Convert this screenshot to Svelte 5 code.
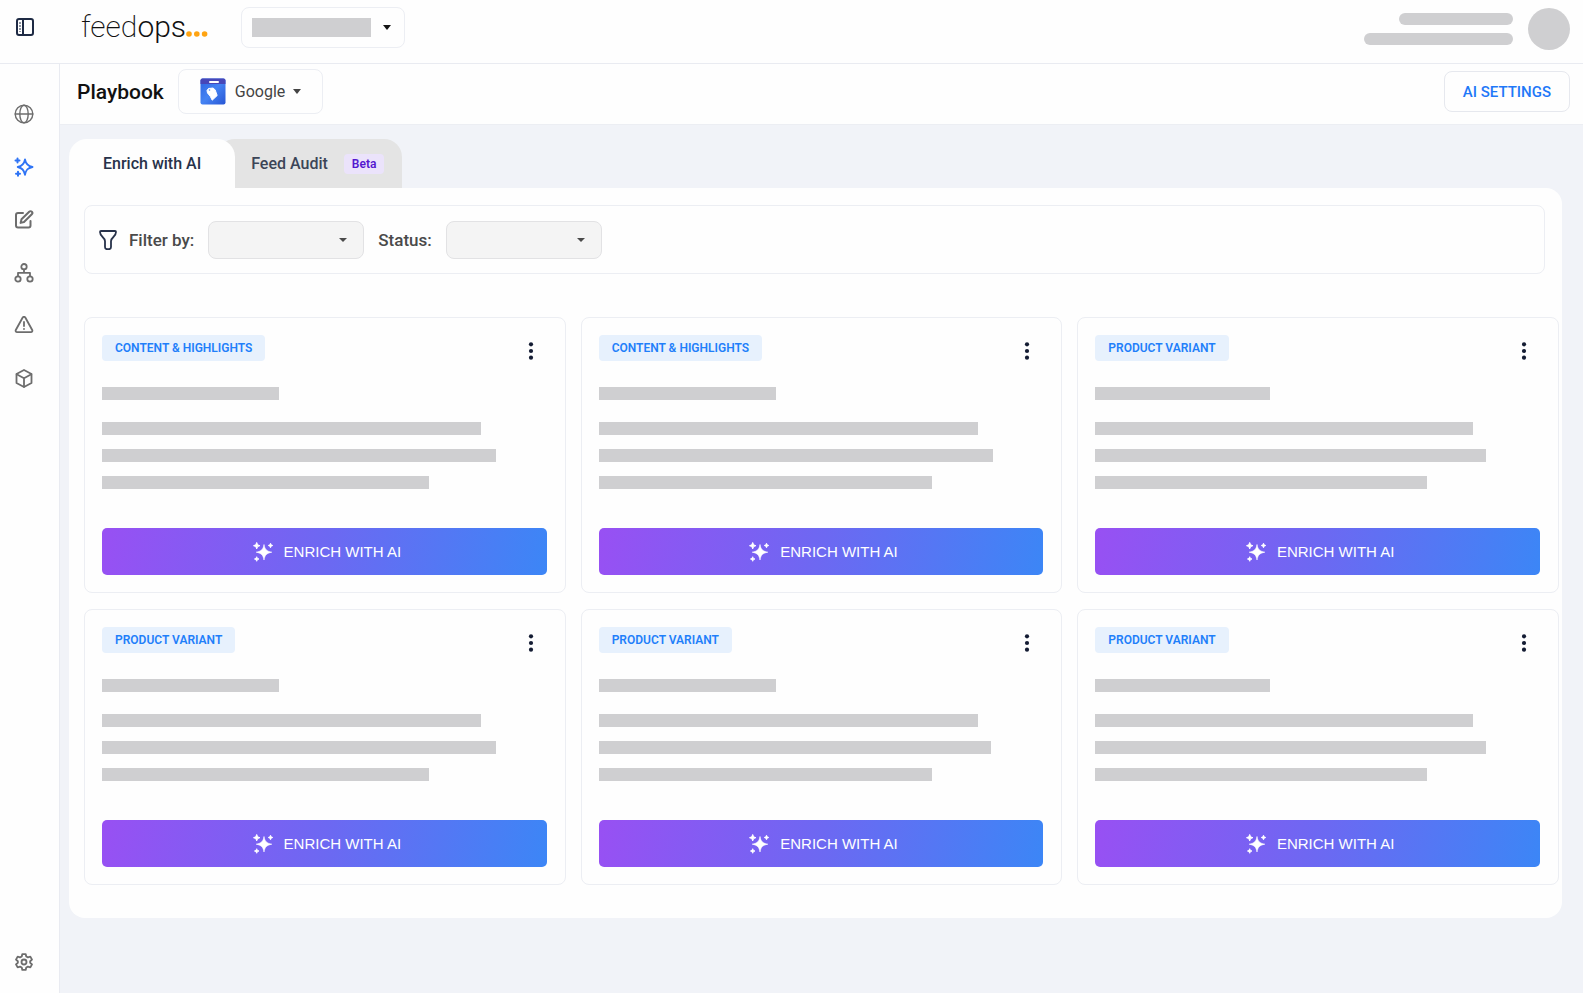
<script>
    const navItems = [
        { id: 'channels', label: 'Channels' },
        { id: 'playbook', label: 'Playbook' },
        { id: 'edit', label: 'Edit' },
        { id: 'structure', label: 'Structure' },
        { id: 'alerts', label: 'Alerts' },
        { id: 'products', label: 'Products' },
    ];

    const cards = [
        { tag: 'Content & Highlights', title: 177, lines: [379, 394, 327] },
        { tag: 'Content & Highlights', title: 177, lines: [379, 394, 333] },
        { tag: 'Product Variant', title: 175, lines: [378, 391, 332] },
        { tag: 'Product Variant', title: 177, lines: [379, 394, 327] },
        { tag: 'Product Variant', title: 177, lines: [379, 392, 333] },
        { tag: 'Product Variant', title: 175, lines: [378, 391, 332] },
    ];

    let activeNav = 'playbook';
    let activeTab = 'enrich';
</script>

<div class="app">
    <header class="topbar">
        <button class="icon-btn toggle" aria-label="Toggle sidebar">
            <svg width="20" height="20" viewBox="0 0 20 20" fill="none" stroke="#1e2a44" stroke-width="2">
                <rect x="2" y="2" width="16" height="16" rx="2" />
                <path d="M8 2v16" />
                <path d="M5 5v10" stroke-width="1" stroke-dasharray="2 1" />
            </svg>
        </button>
        <a class="logo" href="/" aria-label="feedops">
            <span class="thin">feed</span><span class="bold">ops</span>
            <svg width="22" height="6" viewBox="0 0 22 6" fill="#ffa412">
                <circle cx="3" cy="3" r="2.8" />
                <circle cx="10.8" cy="3" r="2.8" />
                <circle cx="18.6" cy="3" r="2.8" />
            </svg>
        </a>
        <div class="picker account">
            <select aria-label="Account"><option></option></select>
            <span class="skeleton account-name"></span>
            <svg class="caret" width="10" height="5" viewBox="0 0 10 5"><path d="M1 0h8L5 5z" /></svg>
        </div>
        <div class="user">
            <div class="user-lines">
                <span class="skeleton round short"></span>
                <span class="skeleton round"></span>
            </div>
            <span class="skeleton avatar"></span>
        </div>
    </header>

    <div class="body">
        <nav class="sidebar">
            {#each navItems as item}
                <button
                    class="icon-btn"
                    class:active={activeNav === item.id}
                    aria-label={item.label}
                    on:click={() => (activeNav = item.id)}
                >
                    <svg
                        width="20"
                        height="20"
                        viewBox="0 0 20 20"
                        fill="none"
                        stroke="currentColor"
                        stroke-width="1.8"
                        stroke-linecap="round"
                        stroke-linejoin="round"
                    >
                        {#if item.id === 'channels'}
                            <circle cx="10" cy="10" r="8.8" stroke-width="1.4" />
                            <ellipse cx="10" cy="10" rx="4.2" ry="8.8" stroke-width="1.4" />
                            <path d="M1.2 10h17.6" stroke-width="1.4" />
                        {:else if item.id === 'playbook'}
                            <path d="M11 2.5c.8 4.5 2.6 6.5 7.5 7.5-4.9 1-6.7 3-7.5 7.8-.8-4.8-2.6-6.8-7.3-7.8 4.7-1 6.5-3 7.3-7.5z" />
                            <path d="M3.5 1.5v4M1.5 3.5h4M4 14.7v4M2 16.7h4" stroke-width="2" />
                        {:else if item.id === 'edit'}
                            <path d="M9 3H4a2 2 0 0 0-2 2v10.500a2 2 0 0 0 2 2h10.500a2 2 0 0 0 2-2V11" stroke-width="2" />
                            <path d="M7.500 9.300l7.700-7.600a1.800 1.800 0 0 1 2.600 2.600L10 12l-3.400.9z" stroke-width="2" />
                        {:else if item.id === 'structure'}
                            <circle cx="10" cy="3.700" r="2.700" />
                            <circle cx="4" cy="16" r="2.700" />
                            <circle cx="16" cy="16" r="2.700" />
                            <path d="M10 6.400v3.400M4 13.300V9.800h12v3.500" />
                        {:else if item.id === 'alerts'}
                            <path d="M8.700 1.500L1.800 14a1.500 1.500 0 0 0 1.300 2.200h13.800a1.500 1.500 0 0 0 1.300-2.200L11.300 1.500a1.500 1.500 0 0 0-2.600 0z" />
                            <path d="M10 6v4M10 12.800v.2" />
                        {:else}
                            <path d="M10 1l7.500 4v9L10 18l-7.500-4V5z" />
                            <path d="M2.700 5.200L10 9.200l7.300-4M10 9.200v8.600" />
                        {/if}
                    </svg>
                </button>
            {/each}
            <button class="icon-btn settings" aria-label="Settings">
                <svg width="20" height="20" viewBox="0 0 24 24" fill="none" stroke="currentColor" stroke-width="2.2" stroke-linejoin="round">
                    <circle cx="12" cy="12" r="3" />
                    <path d="M10 2.500h4l.7 2.900 2 1.100 2.900-.9 2 3.500-2.200 2v1.800l2.200 2-2 3.500-2.900-.9-2 1.100-.7 2.900h-4l-.7-2.900-2-1.100-2.900.9-2-3.500 2.200-2v-1.800l-2.200-2 2-3.500 2.900.9 2-1.100z" />
                </svg>
            </button>
        </nav>

        <div class="content">
            <div class="subheader">
                <h1>Playbook</h1>
                <div class="picker channel">
                    <svg class="channel-icon" width="26" height="27" viewBox="0 0 26 27">
                        <defs>
                            <linearGradient id="shop" x1="0" y1="0" x2="1" y2="1">
                                <stop offset="0" stop-color="#2b63e0" />
                                <stop offset=".5" stop-color="#4583f3" />
                                <stop offset="1" stop-color="#2856d4" />
                            </linearGradient>
                        </defs>
                        <rect x=".5" y=".5" width="25" height="26" rx="2" fill="url(#shop)" />
                        <path d="M2.500.500h21a2 2 0 0 1 2 2V6H.5V2.500a2 2 0 0 1 2-2z" fill="#4747b8" />
                        <rect x="9" y="3" width="10" height="2" rx="1" fill="#fff" />
                        <path
                            d="M7 12.500l1.500-2 4.700-.5 2 2 2 5.500-5 4.700-2-4L7.500 15z"
                            fill="#fff"
                            stroke="#fff"
                            stroke-linejoin="round"
                        />
                        <circle cx="9.500" cy="12" r=".8" fill="#4a86f4" />
                    </svg>
                    <select aria-label="Channel"><option>Google</option></select>
                    <svg class="caret" width="10" height="5" viewBox="0 0 10 5"><path d="M1 0h8L5 5z" /></svg>
                </div>
                <button class="ai-settings">AI SETTINGS</button>
            </div>

            <main>
                <div class="tabs" role="tablist">
                    <button class="tab" role="tab" aria-selected={activeTab === 'enrich'} on:click={() => (activeTab = 'enrich')}>
                        Enrich with AI
                    </button>
                    <button class="tab audit" role="tab" aria-selected={activeTab === 'audit'} on:click={() => (activeTab = 'audit')}>
                        Feed Audit <span class="beta">Beta</span>
                    </button>
                </div>

                <section class="panel">
                    <div class="filters">
                        <svg width="18" height="20" viewBox="0 0 18 20" fill="none" stroke="#27324a" stroke-width="1.8" stroke-linejoin="round">
                            <path d="M2 1h14a1 1 0 0 1 1 1c0 2.400-1.200 3.800-2.800 5.200-1.400 1.200-2.200 2.300-2.200 4V17c0 1.300-1 2.200-2.200 2.200H8.200C7 19.200 6 18.300 6 17v-5.800c0-1.700-.8-2.800-2.200-4C2.200 5.800 1 4.400 1 2a1 1 0 0 1 1-1z" />
                        </svg>
                        <label for="filter-by">Filter by:</label>
                        <div class="picker filter">
                            <select id="filter-by"><option></option></select>
                            <svg class="caret" width="8" height="4" viewBox="0 0 8 4"><path d="M0 0h8L4 4z" /></svg>
                        </div>
                        <label for="status">Status:</label>
                        <div class="picker filter">
                            <select id="status"><option></option></select>
                            <svg class="caret" width="8" height="4" viewBox="0 0 8 4"><path d="M0 0h8L4 4z" /></svg>
                        </div>
                    </div>

                    <div class="grid">
                        {#each cards as card}
                            <article class="card">
                                <div class="card-head">
                                    <span class="tag">{card.tag}</span>
                                    <button class="icon-btn more" aria-label="More options">
                                        <svg width="6" height="20" viewBox="0 0 6 20" fill="#141c33">
                                            <circle cx="3" cy="3.300" r="2.100" />
                                            <circle cx="3" cy="10" r="2.100" />
                                            <circle cx="3" cy="16.700" r="2.100" />
                                        </svg>
                                    </button>
                                </div>
                                <div class="skeleton line title" style="width: {card.title}px"></div>
                                {#each card.lines as width}
                                    <div class="skeleton line" style="width: {width}px"></div>
                                {/each}
                                <button class="enrich">
                                    <svg width="20" height="20" viewBox="0 0 20 20" fill="#fff" stroke="#fff">
                                        <path d="M11 2.500c.9 4.800 2.300 6.600 7.800 7.700-5.500 1.100-6.900 2.900-7.800 7.800-.9-4.900-2.300-6.700-7.800-7.800 5.500-1.100 6.900-2.900 7.800-7.700z" stroke-width=".6" />
                                        <path d="M3.700.5l.9 2.300 2.300.9-2.300.9-.9 2.300-.9-2.300-2.300-.9 2.300-.9z" />
                                        <path d="M17.500 1.200l.7 1.600 1.600.7-1.600.7-.7 1.600-.7-1.600-1.600-.7 1.600-.7z" stroke-width=".8" />
                                        <path d="M3.700 14.700l.7 1.600 1.600.7-1.600.7-.7 1.600-.7-1.600-1.600-.7 1.600-.7z" stroke-width=".8" />
                                    </svg>
                                    ENRICH WITH AI
                                </button>
                            </article>
                        {/each}
                    </div>
                </section>
            </main>
        </div>
    </div>
</div>

<style>
    :global(body) {
        margin: 0;
        background: #f1f3f8;
    }

    .app {
        --surface: #fefefe;
        --border: #eceef3;
        display: flex;
        flex-direction: column;
        min-height: 100vh;
        font-family: Roboto, 'Liberation Sans', sans-serif;
        color: #27324a;
    }

    .app * {
        box-sizing: border-box;
    }

    button,
    select {
        font: inherit;
        cursor: pointer;
    }

    .icon-btn {
        display: flex;
        padding: 0;
        border: 0;
        background: none;
        color: #6d6d6d;
    }

    .icon-btn.active {
        color: #2f74f5;
    }

    .skeleton {
        display: block;
        background: #cfcfd1;
    }

    .topbar {
        display: flex;
        align-items: center;
        height: 64px;
        padding: 0 13px 9px 15px;
        background: var(--surface);
        border-bottom: 1px solid #e9ebf1;
    }

    .logo {
        display: flex;
        align-items: baseline;
        width: 128px;
        margin-left: 46px;
        font-size: 30px;
        line-height: 36px;
        color: #111;
        text-decoration: none;
    }

    .logo .thin {
        font-weight: 200;
    }

    .logo .bold {
        font-weight: 300;
    }

    .picker {
        position: relative;
        display: flex;
        align-items: center;
        border: 1px solid var(--border);
        border-radius: 8px;
    }

    .picker select {
        width: 100%;
        height: 100%;
        border: 0;
        border-radius: 8px;
        background: none;
        color: inherit;
        appearance: none;
    }

    .caret {
        position: absolute;
        right: 12px;
        fill: currentColor;
        pointer-events: none;
    }

    .account {
        width: 164px;
        height: 41px;
        margin-left: 32px;
        color: #141414;
    }

    .account-name {
        position: absolute;
        left: 10px;
        width: 119px;
        height: 19px;
        pointer-events: none;
    }

    .user {
        display: flex;
        align-items: center;
        gap: 15px;
        margin: 3px 0 0 auto;
    }

    .user-lines {
        display: flex;
        flex-direction: column;
        align-items: flex-end;
        gap: 8px;
    }

    .round {
        width: 149px;
        height: 12px;
        border-radius: 6px;
    }

    .round.short {
        width: 114px;
    }

    .avatar {
        width: 42px;
        height: 42px;
        border-radius: 50%;
    }

    .body {
        display: flex;
        flex: 1;
    }

    .sidebar {
        display: flex;
        flex-direction: column;
        gap: 33px;
        width: 60px;
        padding: 40px 0 21px 14px;
        background: var(--surface);
        border-right: 1px solid #e9ebf1;
    }

    .settings {
        margin-top: auto;
    }

    .content {
        flex: 1;
        min-width: 0;
    }

    .subheader {
        display: flex;
        align-items: center;
        height: 61px;
        padding: 0 13px 5px 17px;
        background: var(--surface);
        border-bottom: 1px solid var(--border);
    }

    h1 {
        margin: 0;
        font-size: 21px;
        font-weight: 500;
        color: #111;
    }

    .channel {
        width: 145px;
        height: 45px;
        margin-left: 14px;
        color: #444;
    }

    .channel select {
        padding: 0 0 0 56px;
        font-size: 16px;
    }

    .channel .caret {
        right: 20px;
    }

    .channel-icon {
        position: absolute;
        left: 21px;
        pointer-events: none;
    }

    .ai-settings {
        height: 41px;
        margin-left: auto;
        padding: 0 18px;
        border: 1px solid #e6e8ee;
        border-radius: 8px;
        background: var(--surface);
        color: #1f78f8;
        font-size: 15px;
        font-weight: 500;
    }

    main {
        padding: 14px 21px 14px 9px;
    }

    .tabs {
        display: flex;
    }

    .tab {
        position: relative;
        z-index: 1;
        height: 49px;
        padding: 0 34px;
        border: 0;
        border-radius: 18px 18px 0 0;
        background: var(--surface);
        color: #27324a;
        font-size: 16px;
        font-weight: 500;
    }

    .tab.audit {
        z-index: 0;
        display: flex;
        align-items: center;
        gap: 16px;
        margin-left: -18px;
        padding: 0 18px 0 34px;
        background: #e4e4e4;
        color: #3c4557;
    }

    .beta {
        padding: 0 8px;
        border-radius: 4px;
        background: #ebe3fb;
        color: #5417cf;
        font-size: 12px;
        font-weight: 600;
        line-height: 20px;
    }

    .panel {
        padding: 17px 3px 33px 15px;
        border-radius: 0 16px 16px 16px;
        background: var(--surface);
    }

    .filters {
        display: flex;
        align-items: center;
        gap: 14px;
        height: 69px;
        margin: 0 14px 43px 0;
        padding: 0 14px;
        border: 1px solid var(--border);
        border-radius: 8px;
    }

    .filters label {
        font-size: 17px;
        font-weight: 500;
        color: #4a4a4a;
    }

    .filters > svg {
        margin-right: -2px;
    }

    .filter {
        width: 156px;
        height: 38px;
        border-color: #e2e2e4;
        background: #f4f4f4;
        color: #4a4a4a;
    }

    .filter .caret {
        right: 16px;
    }

    .grid {
        display: grid;
        grid-template-columns: repeat(3, 1fr);
        gap: 16px 15px;
    }

    .card {
        min-width: 0;
        padding: 17px 18px 17px 17px;
        border: 1px solid var(--border);
        border-radius: 8px;
    }

    .card-head {
        display: flex;
        justify-content: space-between;
        align-items: flex-start;
        margin-bottom: 26px;
    }

    .tag {
        padding: 0 13px;
        border-radius: 4px;
        background: #e7f1fd;
        color: #1f7ffa;
        font-size: 12px;
        font-weight: 600;
        line-height: 26px;
        text-transform: uppercase;
    }

    .more {
        height: 20px;
        margin: 6px 13px 0 0;
    }

    .line {
        max-width: 100%;
        height: 13px;
        margin-bottom: 14px;
    }

    .line.title {
        margin-bottom: 22px;
    }

    .enrich {
        display: flex;
        align-items: center;
        justify-content: center;
        gap: 11px;
        width: 100%;
        height: 47px;
        margin-top: 39px;
        padding: 0 0 0 5px;
        border: 0;
        border-radius: 5px;
        background: linear-gradient(100deg, #9850f3, #6d68f2 50%, #3c86f6);
        color: #fff;
        font-family: 'Liberation Sans', Arial, sans-serif;
        font-size: 15px;
    }
</style>
